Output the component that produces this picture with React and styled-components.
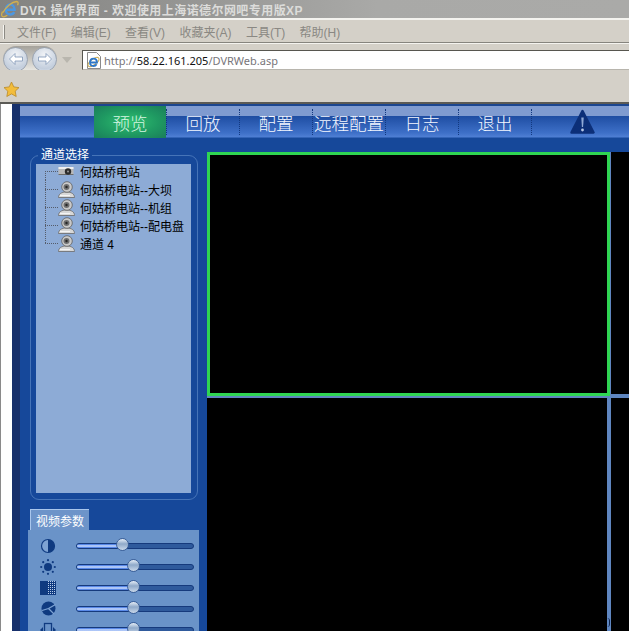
import styled, { createGlobalStyle } from 'styled-components';

const MENU = ['文件(F)', '编辑(E)', '查看(V)', '收藏夹(A)', '工具(T)', '帮助(H)'];
const NAV = [
    { label: '预览', active: true },
    { label: '回放' },
    { label: '配置' },
    { label: '远程配置' },
    { label: '日志' },
    { label: '退出' },
];
const CHANNELS = [
    { name: '何姑桥电站', online: true },
    { name: '何姑桥电站--大坝' },
    { name: '何姑桥电站--机组' },
    { name: '何姑桥电站--配电盘' },
    { name: '通道 4' },
];

function IeLogo({ size }) {
    return (
        <svg width={size} height={size} viewBox="0 0 18 18">
            <path d="M4.800 9.700h8.800c0-3-2-5.200-4.500-5.200S4.800 6.700 4.800 9.700s2 4.800 4.500 4.800c1.900 0 3.200-.9 4-2.400" fill="none" stroke="#4d97e0" strokeWidth="2.400" />
            <path d="M2 12.500C5 6.500 11 2 15.500 1.500c2 0 2 1.800 1 3.800M1.500 11.500c-1.300 3-1.200 5.300.8 5.300 1.300 0 2.700-.6 4-1.600" fill="none" stroke="#d2b04e" strokeWidth="1.300" />
        </svg>
    );
}

function Arrow({ flip }) {
    return (
        <svg width="16" height="14" viewBox="0 0 16 14" style={flip ? { transform: 'scaleX(-1)' } : undefined}>
            <path d="M7 1.500 1.500 7 7 12.500V9h7.500V5H7z" fill="#fff" stroke="#7f95b5" strokeWidth="0.800" />
        </svg>
    );
}

function Star() {
    return (
        <svg width="17" height="17" viewBox="0 0 17 17">
            <path d="M8.500 1l2.300 4.900 5.200.7-3.800 3.600 1 5.300-4.700-2.600-4.700 2.600 1-5.300L1 6.600l5.200-.7z" fill="#f3bd3c" stroke="#b98a2a" strokeWidth="0.800" />
        </svg>
    );
}

function PageFile() {
    return (
        <svg width="16" height="17" viewBox="0 0 16 17">
            <path d="M1.500.5h9l4 4v12h-13z" fill="#fff" stroke="#8a8a8a" />
            <ellipse cx="7.500" cy="10" rx="6.500" ry="2.800" transform="rotate(-38 7.500 10)" fill="none" stroke="#c9a94a" />
            <path d="M4 10.500h7c0-2.300-1.500-3.800-3.500-3.800S4 8.200 4 10.500s1.500 3.500 3.500 3.500c1.400 0 2.500-.7 3.100-1.800" fill="none" stroke="#2f78c8" strokeWidth="1.800" />
        </svg>
    );
}

function WarningIcon() {
    return (
        <svg width="25" height="26" viewBox="0 0 25 26">
            <path d="M12.500 2 23.500 23.500H1.500z" fill="#0c2f78" stroke="#0c2f78" strokeWidth="2.500" strokeLinejoin="round" />
            <path d="M11.300 8.500h2.400l-.6 9.500h-1.200z" fill="#8fa9d6" />
            <circle cx="12.500" cy="21" r="1.400" fill="#b8c8e6" />
        </svg>
    );
}

function CameraIcon() {
    return (
        <svg width="16" height="16" viewBox="0 0 16 16">
            <rect x="0.500" y="4" width="15" height="8" rx="1" fill="#b9b9b9" />
            <rect x="0.500" y="4" width="15" height="2" fill="#efefef" />
            <rect x="0.500" y="11" width="15" height="1" fill="#6c6c6c" />
            <circle cx="10" cy="8.500" r="3.200" fill="#2c2c2c" />
            <circle cx="10" cy="8.500" r="1" fill="#999" />
        </svg>
    );
}

function WebcamIcon() {
    return (
        <svg width="17" height="17" viewBox="0 0 17 17">
            <path d="M.5 16.500c0-3.500 3-5.500 8-5.500s8 2 8 5.500z" fill="#d8d8d8" stroke="#6a6a6a" strokeWidth="0.800" />
            <circle cx="9" cy="6" r="5.300" fill="#c9c9c9" stroke="#5f5f5f" strokeWidth="0.800" />
            <circle cx="8.500" cy="6" r="3" fill="#6f6f6f" />
            <circle cx="8.500" cy="6" r="1.200" fill="#262626" />
            <path d="M2 14.500h10" stroke="#f4f4f4" />
        </svg>
    );
}

const ICON_BLUE = '#0f3a80';

const PARAM_ICONS = [
    <svg key="contrast" width="16" height="16" viewBox="0 0 16 16">
        <circle cx="8" cy="8" r="6.500" fill="#7ea3d3" stroke={ICON_BLUE} strokeWidth="1.200" />
        <path d="M8 1.500a6.500 6.500 0 0 1 0 13z" fill={ICON_BLUE} />
    </svg>,
    <svg key="brightness" width="16" height="16" viewBox="0 0 16 16" fill={ICON_BLUE}>
        <circle cx="8" cy="8" r="4" />
        <circle cx="8" cy="1.200" r="1.100" />
        <circle cx="8" cy="14.800" r="1.100" />
        <circle cx="1.200" cy="8" r="1.100" />
        <circle cx="14.800" cy="8" r="1.100" />
        <circle cx="3.200" cy="3.200" r="1.100" />
        <circle cx="12.800" cy="3.200" r="1.100" />
        <circle cx="3.200" cy="12.800" r="1.100" />
        <circle cx="12.800" cy="12.800" r="1.100" />
    </svg>,
    <svg key="noise" width="16" height="14" viewBox="0 0 16 14">
        <defs>
            <pattern id="noise-dots" width="2" height="2" patternUnits="userSpaceOnUse">
                <rect width="1" height="1" fill="#b9cdea" />
            </pattern>
        </defs>
        <rect width="16" height="14" fill={ICON_BLUE} />
        <rect x="7" width="8" height="14" fill="url(#noise-dots)" />
    </svg>,
    <svg key="saturation" width="15" height="15" viewBox="0 0 15 15">
        <circle cx="7.500" cy="7.500" r="7" fill={ICON_BLUE} />
        <path d="M7.500 7.500 14.500 3.500M7.500 7.500 13 13M7.500 7.500 1 9.500" stroke="#7ea3d3" strokeWidth="1.300" />
    </svg>,
    <svg key="volume" width="16" height="16" viewBox="0 0 16 16" fill={ICON_BLUE}>
        <path d="M0 8l3-3v6zM16 8l-3-3v6z" />
        <rect x="4.500" y="1.500" width="7" height="13" fill="none" stroke={ICON_BLUE} strokeWidth="1.300" />
    </svg>,
];

const SLIDERS = [39, 49, 49, 49, 49];

export default function App() {
    return (
        <Screen>
            <GlobalStyle />
            <TitleBar>
                <IeLogo size={18} />
                <TitleText>DVR 操作界面 - 欢迎使用上海诺德尔网吧专用版XP</TitleText>
            </TitleBar>
            <MenuBar>
                <Grip />
                {MENU.map(item => <MenuItem key={item}>{item}</MenuItem>)}
            </MenuBar>
            <Toolbar>
                <BackForward>
                    <RoundButton><Arrow /></RoundButton>
                    <RoundButton><Arrow flip /></RoundButton>
                </BackForward>
                <DropArrow />
                <AddressBox>
                    <PageFile />
                    <Url>http://<b>58.22.161.205</b>/DVRWeb.asp</Url>
                </AddressBox>
            </Toolbar>
            <FavoritesBar>
                <Star />
            </FavoritesBar>
            <Page>
                <WhiteGutter />
                <NavyGutter />
                <Main>
                    <NavBar>
                        {NAV.map(item => (
                            <NavGroup key={item.label}>
                                <NavItem $active={item.active}>{item.label}</NavItem>
                                <NavDivider />
                            </NavGroup>
                        ))}
                        <AlertSlot><WarningIcon /></AlertSlot>
                    </NavBar>
                    <Content>
                        <Sidebar>
                            <ChannelBox>
                                <ChannelLegend>通道选择</ChannelLegend>
                                <ChannelList>
                                    {CHANNELS.map((channel, i) => (
                                        <TreeRow key={channel.name}>
                                            <Connector $first={i === 0} $last={i === CHANNELS.length - 1} />
                                            <TreeIcon>{channel.online ? <CameraIcon /> : <WebcamIcon />}</TreeIcon>
                                            {channel.name}
                                        </TreeRow>
                                    ))}
                                </ChannelList>
                            </ChannelBox>
                            <ParamTab>视频参数</ParamTab>
                            <ParamPanel>
                                {SLIDERS.map((value, i) => (
                                    <ParamRow key={i}>
                                        <ParamIcon>{PARAM_ICONS[i]}</ParamIcon>
                                        <Track>
                                            <Fill style={{ width: `${value}%` }} />
                                            <Knob style={{ left: `${value}%` }} />
                                        </Track>
                                    </ParamRow>
                                ))}
                            </ParamPanel>
                        </Sidebar>
                        <VideoGrid>
                            <VideoCell $selected />
                            <VideoCell $right $short />
                            <VideoCell $left>
                                <Notch />
                            </VideoCell>
                            <VideoCell $right />
                        </VideoGrid>
                    </Content>
                </Main>
            </Page>
        </Screen>
    );
}

const GlobalStyle = createGlobalStyle`
    html, body {
        margin: 0;
        padding: 0;
        height: 100%;
        overflow: hidden;
        background: #d4d0c8;
    }
    * {
        box-sizing: border-box;
    }
`;

const Screen = styled.div`
    width: 629px;
    height: 631px;
    display: flex;
    flex-direction: column;
    overflow: hidden;
    font-family: "Liberation Sans", "Noto Sans CJK SC", sans-serif;
    font-size: 12px;
`;

const TitleBar = styled.div`
    height: 18px;
    flex: none;
    display: flex;
    align-items: center;
    padding-left: 1px;
    background: linear-gradient(to right, #838381, #a9a9a7 60%, #aaaaa8);
`;

const TitleText = styled.span`
    margin-left: 1px;
    font-weight: bold;
    letter-spacing: 0.43px;
    color: #dcdcda;
    white-space: nowrap;
`;

const MenuBar = styled.div`
    height: 25px;
    flex: none;
    display: flex;
    align-items: center;
    padding: 1px 0 0 3px;
    background: #d4d0c8;
    border-top: 2px solid #f4f3ef;
    border-bottom: 1px solid #86847e;
`;

const Grip = styled.div`
    width: 2px;
    height: 14px;
    margin-right: 12px;
    background: #f6f5f1;
    border-right: 1px solid #8c8a84;
`;

const MenuItem = styled.span`
    margin-right: 14.4px;
    color: #8a8883;
    white-space: nowrap;
`;

const Toolbar = styled.div`
    height: 27px;
    flex: none;
    display: flex;
    align-items: flex-end;
    padding-left: 3px;
    background: #d4d0c8;
    border-top: 1px solid #f4f3ef;
`;

const BackForward = styled.div`
    width: 54px;
    height: 26px;
    margin-bottom: -2px;
    display: flex;
    align-items: center;
    justify-content: space-between;
    border-radius: 13px;
    background: linear-gradient(to bottom, #a5a29b, #ecebe6);
`;

const RoundButton = styled.div`
    width: 25px;
    height: 25px;
    display: flex;
    align-items: center;
    justify-content: center;
    border-radius: 50%;
    border: 1px solid #9aa3b0;
    background: radial-gradient(circle at 50% 30%, #f2f4f7, #c3cedd 70%, #e8edf3);
`;

const DropArrow = styled.div`
    width: 0;
    height: 0;
    margin: 0 10px 7px 5px;
    border-left: 5px solid transparent;
    border-right: 5px solid transparent;
    border-top: 6px solid #b9b6ae;
`;

const AddressBox = styled.div`
    flex: 1;
    height: 20px;
    display: flex;
    align-items: center;
    padding-left: 3px;
    background: #fff;
    border-top: 1px solid #57564f;
    border-left: 1px solid #57564f;
    border-bottom: 1px solid #b8b5ad;
`;

const Url = styled.span`
    margin-left: 2px;
    font-family: "Noto Sans", sans-serif;
    font-size: 11px;
    color: #77757a;
    b {
        font-weight: normal;
        color: #111;
    }
`;

const FavoritesBar = styled.div`
    height: 34px;
    flex: none;
    display: flex;
    align-items: center;
    padding: 6px 0 0 3px;
    background: #d4d0c8;
    border-bottom: 2px solid #5b5a55;
`;

const Page = styled.div`
    flex: 1;
    min-height: 0;
    display: flex;
`;

const WhiteGutter = styled.div`
    width: 12px;
    flex: none;
    background: #fff;
    border-left: 1px solid #8a8a8a;
`;

const NavyGutter = styled.div`
    width: 8px;
    flex: none;
    background: #17306b;
`;

const Main = styled.div`
    flex: 1;
    min-width: 0;
    display: flex;
    flex-direction: column;
    background: #16489a;
`;

const NavBar = styled.div`
    height: 35px;
    flex: none;
    display: flex;
    padding: 2px 0 1px 74px;
    background: linear-gradient(
        to bottom,
        #1b4690 0,
        #1b4690 2px,
        #7f9bd0 2px,
        #7f9bd0 12px,
        #1e4da2 12px,
        #3e70c8 29px,
        #4f7fd4 33px,
        #16489a 34px
    );
`;

const NavGroup = styled.div`
    display: flex;
    align-items: center;
`;

const NavItem = styled.div`
    width: 72px;
    height: 100%;
    display: flex;
    align-items: center;
    justify-content: center;
    color: ${p => (p.$active ? '#d6f5e2' : '#f4f7ff')};
    font-size: 17.5px;
    font-weight: 300;
    white-space: nowrap;
    background: ${p => (p.$active ? 'radial-gradient(ellipse at center, #2fc070 0, #1f9a62 55%, #1a7d5a 100%)' : 'none')};
`;

const NavDivider = styled.div`
    width: 1px;
    height: 26px;
    border-left: 1px dotted #12387f;
`;

const AlertSlot = styled.div`
    margin-left: 38px;
    display: flex;
    align-items: center;
`;

const Content = styled.div`
    flex: 1;
    min-height: 0;
    display: flex;
`;

const Sidebar = styled.div`
    width: 187px;
    flex: none;
    display: flex;
    flex-direction: column;
    padding: 10px 0 0 8px;
    overflow: hidden;
`;

const ChannelBox = styled.fieldset`
    width: 168px;
    height: 351px;
    flex: none;
    margin: 0 0 9px 2px;
    padding: 0 6px 0 5px;
    border: 1px solid #4674b8;
    border-radius: 9px;
`;

const ChannelLegend = styled.legend`
    margin-left: 2px;
    padding: 0 3px;
    color: #fff;
    font-size: 12px;
    line-height: 13px;
`;

const ChannelList = styled.div`
    display: flow-root;
    height: 329px;
    margin-top: 2px;
    background: #8dabd6;
`;

const TreeRow = styled.div`
    height: 18px;
    display: flex;
    align-items: center;
    padding-left: 9px;
    color: #000;
    white-space: nowrap;
    &:first-child {
        margin-top: -2px;
    }
`;

const Connector = styled.div`
    width: 13px;
    height: 18px;
    flex: none;
    background:
        repeating-linear-gradient(to right, #555c6a 0 1px, transparent 1px 2px) left 9px / 13px 1px no-repeat,
        repeating-linear-gradient(to bottom, #555c6a 0 1px, transparent 1px 2px)
            left ${p => (p.$first ? '9px' : '0')} / 1px ${p => (p.$last ? '9px' : p.$first ? '9px' : '18px')} no-repeat;
`;

const TreeIcon = styled.span`
    width: 22px;
    height: 18px;
    display: flex;
    align-items: center;
`;

const ParamTab = styled.div`
    width: 59px;
    height: 21px;
    flex: none;
    margin-left: 2px;
    display: flex;
    align-items: center;
    justify-content: center;
    color: #fff;
    background: #6d94c9;
    border-top: 1px solid #a9c6ec;
    border-left: 1px solid #a9c6ec;
`;

const ParamPanel = styled.div`
    width: 171px;
    flex: 1;
    padding-top: 5px;
    background: #6a93c8;
`;

const ParamRow = styled.div`
    height: 21px;
    display: flex;
    align-items: center;
    padding-left: 10px;
`;

const ParamIcon = styled.span`
    width: 20px;
    display: flex;
    justify-content: center;
`;

const Track = styled.div`
    position: relative;
    width: 118px;
    height: 6px;
    margin-left: 18px;
    border: 1px solid #163a7c;
    border-radius: 3px;
    background: #2f5a9c;
`;

const Fill = styled.div`
    height: 100%;
    border-radius: 2px 0 0 2px;
    background: linear-gradient(to bottom, #2f6ae0, #d6e4ff 50%, #2f6ae0);
`;

const Knob = styled.div`
    position: absolute;
    top: -5.500px;
    width: 13px;
    height: 13px;
    margin-left: -6.500px;
    border-radius: 50%;
    border: 1px solid #3b5f98;
    background: linear-gradient(to bottom, #e6eef7, #8fa9c9 45%, #c9d8ea);
`;

const VideoGrid = styled.div`
    flex: 1;
    min-width: 0;
    margin-top: 13px;
    display: grid;
    grid-template-columns: 403px 1fr;
    grid-template-rows: 246px 1fr;
    background: #5f86c0;
`;

const VideoCell = styled.div`
    position: relative;
    background: #000;
    height: ${p => (p.$selected ? '244px' : p.$short ? '242px' : 'auto')};
    border: ${p => (p.$selected ? '3px solid #2fd552' : 'none')};
    margin-left: ${p => (p.$right ? '1px' : '0')};
    margin-right: ${p => (p.$left ? '3px' : '0')};
`;

const Notch = styled.div`
    position: absolute;
    right: -3px;
    top: 220px;
    width: 3px;
    height: 9px;
    border-right: 1px solid #10264f;
    border-radius: 0 4px 4px 0;
`;
